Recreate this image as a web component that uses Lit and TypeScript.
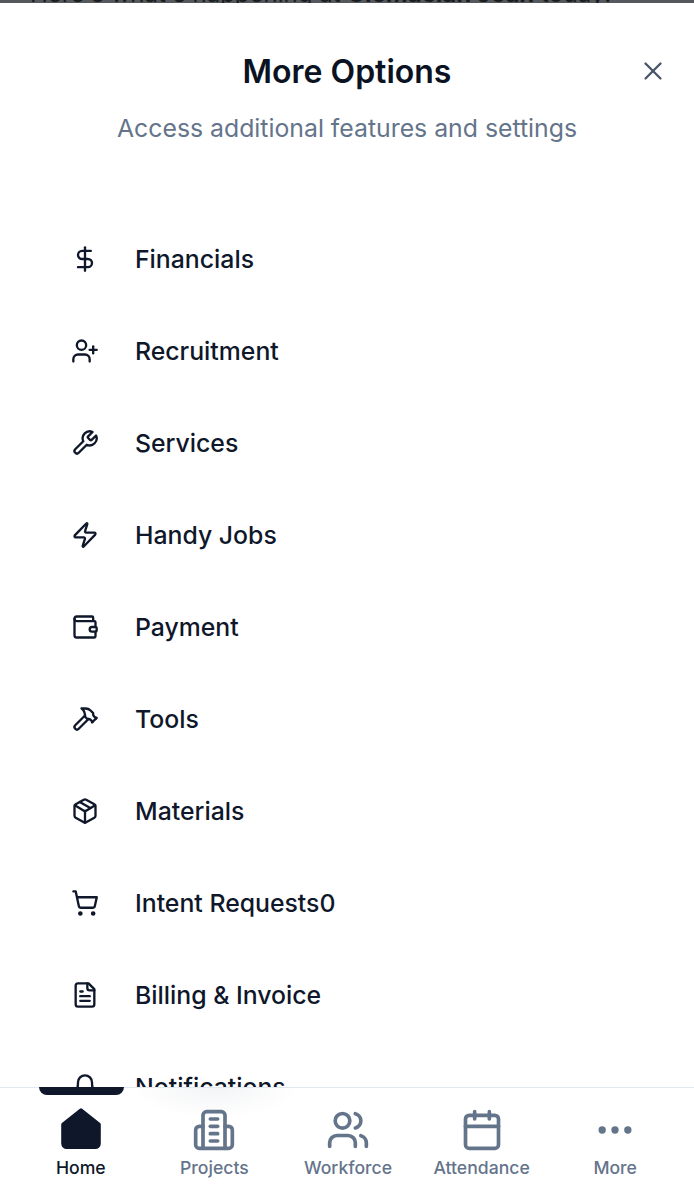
import { LitElement, html, css, svg } from 'lit';
import { customElement } from 'lit/decorators.js';

const icons = {
  dollar: svg`<line x1="12" x2="12" y1="2" y2="22"/><path d="M17 5H9.5a3.5 3.5 0 0 0 0 7h5a3.5 3.5 0 0 1 0 7H6"/>`,
  userPlus: svg`<path d="M16 21v-2a4 4 0 0 0-4-4H6a4 4 0 0 0-4 4v2"/><circle cx="9" cy="7" r="4"/><line x1="19" x2="19" y1="8" y2="14"/><line x1="22" x2="16" y1="11" y2="11"/>`,
  wrench: svg`<path d="M14.7 6.3a1 1 0 0 0 0 1.4l1.6 1.6a1 1 0 0 0 1.4 0l3.77-3.77a6 6 0 0 1-7.94 7.94l-6.91 6.91a2.12 2.12 0 0 1-3-3l6.91-6.91a6 6 0 0 1 7.94-7.94l-3.76 3.76z"/>`,
  zap: svg`<path d="M4 14a1 1 0 0 1-.78-1.63l9.9-10.2a.5.5 0 0 1 .86.46l-1.92 6.02A1 1 0 0 0 13 10h7a1 1 0 0 1 .78 1.63l-9.9 10.2a.5.5 0 0 1-.86-.46l1.92-6.02A1 1 0 0 0 11 14z"/>`,
  wallet: svg`<path d="M19 7V4a1 1 0 0 0-1-1H5a2 2 0 0 0 0 4h15a1 1 0 0 1 1 1v4h-3a2 2 0 0 0 0 4h3a1 1 0 0 0 1-1v-2a1 1 0 0 0-1-1"/><path d="M3 5v14a2 2 0 0 0 2 2h15a1 1 0 0 0 1-1v-4"/>`,
  hammer: svg`<path d="m15 12-8.373 8.373a1 1 0 1 1-3-3L12 9"/><path d="m18 15 4-4"/><path d="m21.5 11.5-1.914-1.914A2 2 0 0 1 19 8.172V7l-2.26-2.26a6 6 0 0 0-4.202-1.756L9 2.96l.92.82A6.18 6.18 0 0 1 12 8.4V10l2 2h1.172a2 2 0 0 1 1.414.586L18.5 14.5"/>`,
  box: svg`<path d="M11 21.73a2 2 0 0 0 2 0l7-4A2 2 0 0 0 21 16V8a2 2 0 0 0-1-1.73l-7-4a2 2 0 0 0-2 0l-7 4A2 2 0 0 0 3 8v8a2 2 0 0 0 1 1.73z"/><path d="M12 22V12"/><path d="m3.3 7 7.703 4.734a2 2 0 0 0 1.994 0L20.7 7"/><path d="m7.5 4.27 9 5.15"/>`,
  cart: svg`<circle cx="8" cy="21" r="1"/><circle cx="19" cy="21" r="1"/><path d="M2.05 2.05h2l2.66 12.42a2 2 0 0 0 2 1.58h9.78a2 2 0 0 0 1.95-1.57l1.65-7.43H5.12"/>`,
  file: svg`<path d="M15 2H6a2 2 0 0 0-2 2v16a2 2 0 0 0 2 2h12a2 2 0 0 0 2-2V7Z"/><path d="M14 2v4a2 2 0 0 0 2 2h4"/><path d="M10 9H8"/><path d="M16 13H8"/><path d="M16 17H8"/>`,
  bell: svg`<path d="M6 8a6 6 0 0 1 12 0c0 7 3 9 3 9H3s3-2 3-9"/><path d="M10.3 21a1.94 1.94 0 0 0 3.4 0"/>`,
  building: svg`<path d="M6 22V4a2 2 0 0 1 2-2h8a2 2 0 0 1 2 2v18Z"/><path d="M6 10H4a2 2 0 0 0-2 2v8a2 2 0 0 0 2 2h2"/><path d="M18 10h2a2 2 0 0 1 2 2v8a2 2 0 0 1-2 2h-2"/><path d="M10 6h4"/><path d="M10 10h4"/><path d="M10 14h4"/><path d="M10 18h4"/>`,
  users: svg`<path d="M16 21v-2a4 4 0 0 0-4-4H6a4 4 0 0 0-4 4v2"/><circle cx="9" cy="7" r="4"/><path d="M22 21v-2a4 4 0 0 0-3-3.87"/><path d="M16 3.13a4 4 0 0 1 0 7.75"/>`,
  calendar: svg`<path d="M8 2v4"/><path d="M16 2v4"/><rect width="18" height="18" x="3" y="4" rx="2"/><path d="M3 10h18"/>`,
  more: svg`<circle cx="12" cy="12" r="1"/><circle cx="19" cy="12" r="1"/><circle cx="5" cy="12" r="1"/>`,
  close: svg`<path d="M18 6 6 18"/><path d="m6 6 12 12"/>`,
};

const items = [
  { label: 'Financials', icon: icons.dollar },
  { label: 'Recruitment', icon: icons.userPlus },
  { label: 'Services', icon: icons.wrench },
  { label: 'Handy Jobs', icon: icons.zap },
  { label: 'Payment', icon: icons.wallet },
  { label: 'Tools', icon: icons.hammer },
  { label: 'Materials', icon: icons.box },
  { label: 'Intent Requests0', icon: icons.cart },
  { label: 'Billing & Invoice', icon: icons.file },
  { label: 'Notifications', icon: icons.bell },
];

const tabs = [
  { label: 'Projects', icon: icons.building },
  { label: 'Workforce', icon: icons.users },
  { label: 'Attendance', icon: icons.calendar },
  { label: 'More', icon: icons.more },
];

@customElement('app-root')
export class AppRoot extends LitElement {
  static styles = css`
    :host {
      display: block;
      height: 1200px;
      overflow: hidden;
      background: #fff;
      font-family: Inter, "Liberation Sans", sans-serif;
    }
    .page {
      display: flex;
      flex-direction: column;
      height: 100%;
    }

    /* ── Page behind the sheet ────── */
    .behind {
      flex: none;
      height: 3px;
      overflow: hidden;
      padding-left: 30px;
      background: #55585d;
      color: #1a1c20;
      font-size: 24px;
      line-height: 3px;
      white-space: nowrap;
    }
    .behind span {
      display: block;
      margin-top: -8px;
    }

    /* ── Header ───────────────────── */
    .sheet-head {
      flex: none;
      position: relative;
      display: flex;
      flex-direction: column;
      align-items: center;
      padding-top: 49px;
    }
    .sheet-head h1 {
      margin: 0;
      font-size: 32px;
      line-height: 40px;
      font-weight: 600;
      color: #0b1222;
    }
    .sheet-head p {
      margin: 20px 0 0;
      font-size: 24.8px;
      line-height: 32px;
      color: #64748b;
    }
    .close {
      position: absolute;
      top: 53px;
      right: 26px;
      width: 30px;
      height: 30px;
      color: #475569;
    }
    .close svg { display: block; width: 100%; height: 100%; stroke-width: 1.8; }

    /* ── Menu ─────────────────────── */
    .menu {
      flex: 1;
      min-height: 0;
      overflow: hidden;
      padding: 69px 0 0 71px;
    }
    .row {
      display: flex;
      align-items: center;
      gap: 36px;
      height: 92px;
      font-size: 24.8px;
      font-weight: 450;
      color: #0f172a;
    }
    .row svg { width: 28px; height: 28px; flex: none; stroke-width: 2; }

    svg {
      fill: none;
      stroke: currentColor;
      stroke-linecap: round;
      stroke-linejoin: round;
    }

    /* ── Bottom nav ───────────────── */
    nav {
      flex: none;
      position: relative;
      display: grid;
      grid-template-columns: repeat(5, 1fr);
      height: 113px;
      padding: 0 12px 0 14px;
      box-sizing: border-box;
      background: #fff;
      border-top: 1px solid #e2e8f0;
    }
    nav::before {
      content: '';
      position: absolute;
      top: 0;
      left: 130px;
      width: 170px;
      height: 30px;
      background: radial-gradient(ellipse at top, #f3f4f6, rgba(243, 244, 246, 0) 70%);
    }
    .tab {
      position: relative;
      display: flex;
      flex-direction: column;
      align-items: center;
      padding-top: 20px;
      gap: 2px;
      font-size: 17.6px;
      line-height: 28px;
      font-weight: 500;
      color: #64748b;
    }
    .tab svg { width: 44px; height: 44px; stroke-width: 2; }
    .tab.active { color: #0f172a; }
    .indicator {
      position: absolute;
      top: -1px;
      left: 39px;
      width: 85px;
      height: 8px;
      background: #0f172a;
      border-radius: 0 0 8px 8px;
    }
  `;

  render() {
    return html`
      <div class="page">
        <div class="behind"><span>Here's what's happening at <b>Clemacian Jean</b> today!</span></div>
        <header class="sheet-head">
          <h1>More Options</h1>
          <p>Access additional features and settings</p>
          <span class="close"><svg viewBox="0 0 24 24">${icons.close}</svg></span>
        </header>
        <div class="menu">
          ${items.map(
            (item) => html`
              <div class="row">
                <svg viewBox="0 0 24 24">${item.icon}</svg>
                <span>${item.label}</span>
              </div>
            `
          )}
        </div>
        <nav>
          <span class="indicator"></span>
          <div class="tab active">
            <svg viewBox="0 0 24 24"><path fill="currentColor" d="M12 1.2 21.8 9V19.4a2 2 0 0 1-2 2H4.2a2 2 0 0 1-2-2V9Z"/></svg>
            <span>Home</span>
          </div>
          ${tabs.map(
            (tab) => html`
              <div class="tab">
                <svg viewBox="0 0 24 24">${tab.icon}</svg>
                <span>${tab.label}</span>
              </div>
            `
          )}
        </nav>
      </div>
    `;
  }
}
